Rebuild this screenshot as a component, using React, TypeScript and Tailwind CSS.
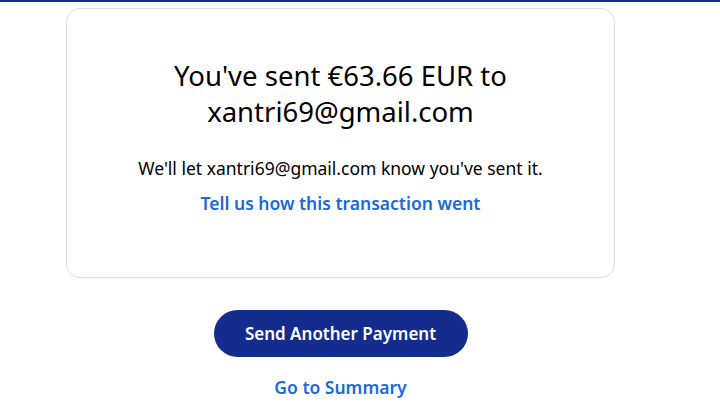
export default function App() {
  return (
    <div className="min-h-[417px] bg-white font-['Noto_Sans','Lato',sans-serif] text-[#001435]">
      <div className="h-[2px] bg-[#142c8e]" />
      <div className="w-[681px] flex flex-col items-center pt-[6px]">
        <div className="w-[549px] h-[270px] border border-[#dcdcdc] rounded-[14px] flex flex-col items-center pt-[49px]">
          <h1 className="text-[27.5px] leading-[36px] text-center font-normal text-[#000]">
            You've sent €63.66 EUR to
            <br />
            xantri69@gmail.com
          </h1>
          <p className="mt-[26px] text-[17.5px] leading-[24px] text-[#000]">
            We'll let xantri69@gmail.com know you've sent it.
          </p>
          <a className="mt-[11px] text-[17.5px] leading-[24px] font-semibold text-[#1a6ad8]">
            Tell us how this transaction went
          </a>
        </div>
        <button className="mt-[32px] w-[254px] h-[47px] rounded-full bg-[#142c8e] text-white text-[17px] font-semibold">
          Send Another Payment
        </button>
        <a className="mt-[18px] text-[17.5px] leading-[24px] font-semibold text-[#1a6ad8]">
          Go to Summary
        </a>
      </div>
    </div>
  );
}
